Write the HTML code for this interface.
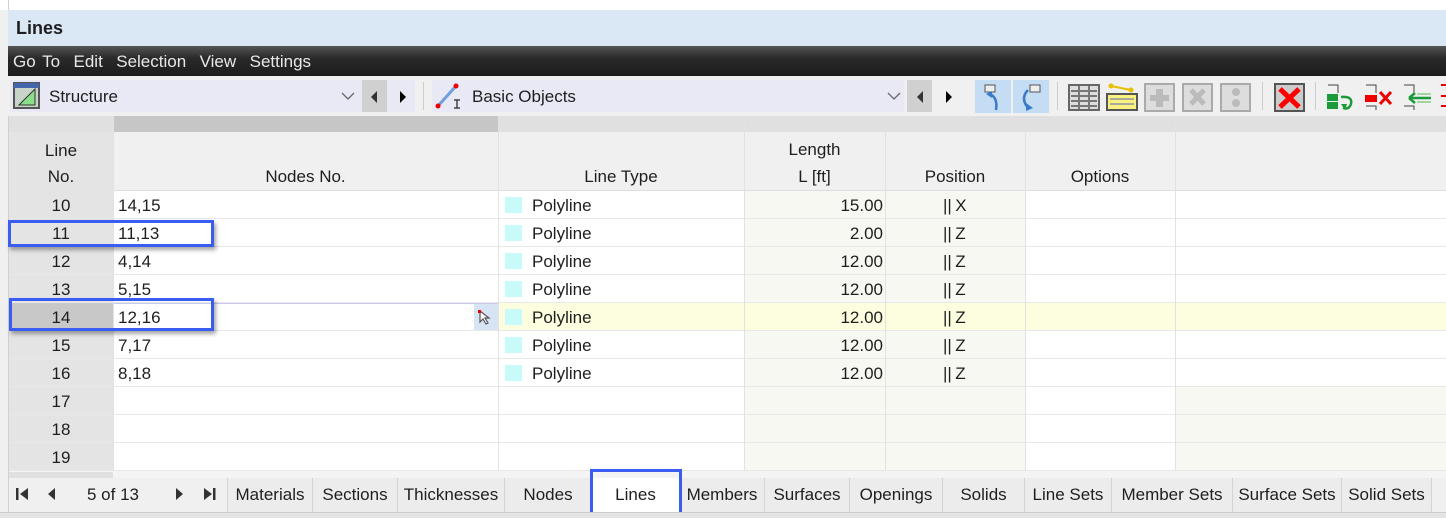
<!DOCTYPE html>
<html><head><meta charset="utf-8">
<style>
*{margin:0;padding:0;box-sizing:border-box}
body{width:1446px;height:518px;overflow:hidden;background:#f0f0f0;font-family:"Liberation Sans",sans-serif;font-size:17px;color:#1e1e1e;position:relative}
.a{position:absolute}
.t{position:absolute;white-space:nowrap;line-height:28px}
.tab{position:absolute;top:478px;height:34px;line-height:34px;text-align:center;background:#ececec;border-right:1px solid #d4d4d4;font-size:17px}
</style></head><body>
<div class="a" style="left:0;top:0;width:1446px;height:10px;background:#fff"></div>
<div class="a" style="left:8px;top:0;width:1px;height:518px;background:#d0d0d0"></div>
<div class="a" style="left:8px;top:10px;width:1438px;height:36px;background:#dae7f5"></div>
<div class="t" style="left:16px;top:14px;font-weight:bold;font-size:18px">Lines</div>
<div class="a" style="left:8px;top:46px;width:1438px;height:30px;background:linear-gradient(#555,#2a2a2a 40%,#1c1c1c)"></div>
<div class="t" style="left:13px;top:48px;color:#e8e8e8;word-spacing:2px">Go To&nbsp; Edit&nbsp; Selection&nbsp; View&nbsp; Settings</div>
<!-- toolbar -->
<div class="a" style="left:8px;top:76px;width:1438px;height:40px;background:#f0f0f0"></div>
<div class="a" style="left:10px;top:80px;width:405px;height:32px;background:#e8e9f4"></div>
<div class="a" style="left:362px;top:80px;width:25px;height:32px;background:#d0d0d0"></div>
<svg class="a" style="left:13px;top:82px" width="28" height="28"><rect x="1" y="1" width="25" height="25" fill="#c8d4c8" stroke="#555" stroke-width="2"/><rect x="1" y="1" width="25" height="5" fill="#4466aa"/><path d="M6 23L22 7V23Z" fill="#88e088" stroke="#333"/></svg>
<div class="t" style="left:49px;top:83px">Structure</div>
<svg class="a" style="left:341px;top:91px" width="14" height="10"><path d="M1 2L7 8L13 2" stroke="#666" stroke-width="1.3" fill="none"/></svg>
<svg class="a" style="left:368px;top:90px" width="12" height="14"><path d="M9 1L3 7L9 13Z" fill="#333"/></svg>
<svg class="a" style="left:397px;top:90px" width="12" height="14"><path d="M3 1L9 7L3 13Z" fill="#000"/></svg>
<div class="a" style="left:423px;top:82px;width:1px;height:28px;background:#ccc"></div>
<div class="a" style="left:432px;top:80px;width:472px;height:32px;background:#e8e9f4"></div>
<div class="a" style="left:907px;top:80px;width:25px;height:32px;background:#d0d0d0"></div>
<svg class="a" style="left:434px;top:82px" width="30" height="28"><line x1="4" y1="24" x2="22" y2="4" stroke="#6fa0e0" stroke-width="3"/><circle cx="4" cy="24" r="2.5" fill="#e00"/><circle cx="22" cy="4" r="2.5" fill="#e00"/><path d="M20 18h6M23 18v8M20 26h6" stroke="#444" stroke-width="1.5"/></svg>
<div class="t" style="left:472px;top:83px">Basic Objects</div>
<svg class="a" style="left:887px;top:91px" width="14" height="10"><path d="M1 2L7 8L13 2" stroke="#666" stroke-width="1.3" fill="none"/></svg>
<svg class="a" style="left:914px;top:90px" width="12" height="14"><path d="M9 1L3 7L9 13Z" fill="#333"/></svg>
<svg class="a" style="left:943px;top:90px" width="12" height="14"><path d="M3 1L9 7L3 13Z" fill="#000"/></svg>
<div class="a" style="left:975px;top:80px;width:36px;height:33px;background:#c4dcf4"></div>
<div class="a" style="left:1013px;top:80px;width:36px;height:33px;background:#c4dcf4"></div>
<svg class="a" style="left:978px;top:82px" width="32" height="30"><rect x="7" y="3" width="10" height="7" fill="#eee" stroke="#555"/><path d="M12 12Q20 16 18 28" stroke="#3a7bc8" stroke-width="2.5" fill="none"/><path d="M8 12L14 9L14 16Z" fill="#3a7bc8"/></svg>
<svg class="a" style="left:1016px;top:82px" width="32" height="30"><rect x="14" y="3" width="10" height="7" fill="#eee" stroke="#555"/><path d="M12 8Q4 16 12 26" stroke="#3a7bc8" stroke-width="2.5" fill="none"/><path d="M10 21L17 26L10 29Z" fill="#3a7bc8"/></svg>
<div class="a" style="left:1057px;top:82px;width:1px;height:28px;background:#ccc"></div>
<svg class="a" style="left:1068px;top:82px" width="32" height="30"><rect x="1" y="3" width="30" height="25" fill="#ddd" stroke="#666" stroke-width="2"/><path d="M3 9h26M3 14h26M3 19h26M3 24h26M11 4v23M21 4v23" stroke="#777" stroke-width="2"/></svg>
<svg class="a" style="left:1106px;top:82px" width="32" height="30"><line x1="5" y1="4" x2="25" y2="8" stroke="#e8c000" stroke-width="2"/><circle cx="5" cy="4" r="2.5" fill="#e8c000"/><circle cx="25" cy="8" r="2.5" fill="#e8c000"/><rect x="1" y="12" width="30" height="16" fill="#f8f080" stroke="#555" stroke-width="2"/><path d="M4 17h24M4 22h24" stroke="#aa9" stroke-width="2"/></svg>
<svg class="a" style="left:1144px;top:82px" width="32" height="30"><rect x="1" y="2" width="29" height="27" fill="#ddd" stroke="#aaa" stroke-width="2"/><path d="M12 7h7v6h6v6h-6v6h-7v-6h-6v-6h6Z" fill="#bbb"/></svg>
<svg class="a" style="left:1182px;top:82px" width="32" height="30"><rect x="1" y="2" width="29" height="27" fill="#ddd" stroke="#aaa" stroke-width="2"/><path d="M9 8L22 22M22 8L9 22" stroke="#bbb" stroke-width="5"/></svg>
<svg class="a" style="left:1220px;top:82px" width="32" height="30"><rect x="1" y="2" width="29" height="27" fill="#ddd" stroke="#aaa" stroke-width="2"/><circle cx="16" cy="10" r="4" fill="#bbb"/><circle cx="16" cy="21" r="4" fill="#bbb"/></svg>
<div class="a" style="left:1262px;top:82px;width:1px;height:28px;background:#ccc"></div>
<svg class="a" style="left:1274px;top:82px" width="32" height="30"><rect x="1" y="2" width="29" height="27" fill="#ccc" stroke="#555" stroke-width="2"/><path d="M6 7L25 25M25 7L6 25" stroke="#f00" stroke-width="5"/></svg>
<div class="a" style="left:1315px;top:82px;width:1px;height:28px;background:#ccc"></div>
<svg class="a" style="left:1325px;top:82px" width="34" height="30"><path d="M3 3h10v8" stroke="#444" fill="none"/><rect x="2" y="12" width="11" height="7" fill="#1a9a3a"/><rect x="2" y="20" width="11" height="7" fill="#1a9a3a"/><path d="M16 15Q28 14 26 22Q24 28 18 26" stroke="#1a9a3a" stroke-width="2.5" fill="none"/><path d="M16 22L20 28L22 22Z" fill="#1a9a3a"/></svg>
<svg class="a" style="left:1363px;top:82px" width="34" height="30"><path d="M3 3h10v8M3 24h10v4" stroke="#444" fill="none"/><rect x="2" y="13" width="12" height="7" fill="#e00"/><path d="M17 10L28 22M28 10L17 22" stroke="#e00" stroke-width="3"/></svg>
<svg class="a" style="left:1401px;top:82px" width="34" height="30"><path d="M3 3h10v8M3 24h10v4" stroke="#444" fill="none"/><path d="M8 16h22M8 16l6-5M8 16l6 5" stroke="#1a9a3a" stroke-width="2.5" fill="none"/><path d="M16 12h14M16 20h14" stroke="#8c8" stroke-width="1.5"/></svg>
<svg class="a" style="left:1438px;top:82px" width="8" height="30"><path d="M3 3h5M3 14h5M3 24h5" stroke="#e00" stroke-width="2"/></svg>
<!-- table header -->
<div class="a" style="left:9px;top:116px;width:1437px;height:16px;background:#e0e0e0"></div>
<div class="a" style="left:113px;top:116px;width:385px;height:16px;background:#c6c6c6"></div>
<div class="a" style="left:9px;top:132px;width:1437px;height:59px;background:#f0f0f0;border-bottom:1px solid #ddd"></div>
<div class="a" style="left:9px;top:132px;width:104px;height:59px;background:#e4e4e4"></div>
<div class="t" style="left:9px;top:138px;width:104px;text-align:center;line-height:26px">Line<br>No.</div>
<div class="t" style="left:113px;top:163px;width:385px;text-align:center">Nodes No.</div>
<div class="t" style="left:498px;top:163px;width:246px;text-align:center">Line Type</div>
<div class="t" style="left:744px;top:136px;width:141px;text-align:center;line-height:27px">Length<br>L [ft]</div>
<div class="t" style="left:885px;top:163px;width:140px;text-align:center">Position</div>
<div class="t" style="left:1025px;top:163px;width:150px;text-align:center">Options</div>
<!-- body -->
<div class="a" style="left:9px;top:191px;width:1437px;height:287px;background:#fff"></div>
<div class="a" style="left:9px;top:191px;width:104px;height:287px;background:#e4e4e4"></div>
<div class="a" style="left:744px;top:191px;width:281px;height:287px;background:#f8f8f2"></div>
<div class="a" style="left:1175px;top:387px;width:271px;height:91px;background:#f8f8f2"></div>
<div class="a" style="left:9px;top:303px;width:1437px;height:28px;background:#fdfde0"></div>
<div class="a" style="left:9px;top:303px;width:104px;height:28px;background:#c8c8c8"></div>
<div class="a" style="left:113px;top:303px;width:385px;height:28px;background:#fff;border:1px solid #c8c8f0"></div>
<div class="a" style="left:474px;top:304px;width:24px;height:26px;background:#d6e4f4"></div>
<svg class="a" style="left:476px;top:308px" width="20" height="18"><path d="M4 3L4 14L7 11L10 16L12 15L9 10L13 10Z" stroke="#555" fill="#fff" stroke-width="1.2"/><rect x="2" y="2" width="3" height="3" fill="#e00"/></svg>
<div id="rows"></div>
<div class="a" style="left:113px;top:116px;width:1px;height:362px;background:#e2e2e2"></div>
<div class="a" style="left:498px;top:116px;width:1px;height:362px;background:#e2e2e2"></div>
<div class="a" style="left:744px;top:116px;width:1px;height:362px;background:#e2e2e2"></div>
<div class="a" style="left:885px;top:116px;width:1px;height:362px;background:#e2e2e2"></div>
<div class="a" style="left:1025px;top:116px;width:1px;height:362px;background:#e2e2e2"></div>
<div class="a" style="left:1175px;top:116px;width:1px;height:362px;background:#e2e2e2"></div>
<script>
var d=[["10","14,15","15.00","X"],["11","11,13","2.00","Z"],["12","4,14","12.00","Z"],["13","5,15","12.00","Z"],["14","12,16","12.00","Z"],["15","7,17","12.00","Z"],["16","8,18","12.00","Z"],["17"],["18"],["19"]];
var h="";
for(var i=0;i<10;i++){var y=191+28*i,r=d[i],ty=y+1;
h+='<div class="a" style="left:9px;top:'+(y+27)+'px;width:1437px;height:1px;background:#e8e8e8"></div>';
h+='<div class="t" style="left:9px;top:'+ty+'px;width:104px;text-align:center">'+r[0]+'</div>';
if(r[1]){h+='<div class="t" style="left:118px;top:'+ty+'px">'+r[1]+'</div>';
h+='<div class="a" style="left:505px;top:'+(y+6)+'px;width:17px;height:16px;background:#c8fafa"></div>';
h+='<div class="t" style="left:532px;top:'+ty+'px">Polyline</div>';
h+='<div class="t" style="left:744px;top:'+ty+'px;width:139px;text-align:right">'+r[2]+'</div>';
h+='<div class="t" style="left:943px;top:'+ty+'px">||&thinsp;'+r[3]+'</div>';}}
document.getElementById("rows").innerHTML=h;
</script>
<div class="a" style="left:8px;top:220px;width:206px;height:27px;border:3px solid #3a5cf0;box-shadow:2px 3px 4px rgba(0,0,0,.35)"></div>
<div class="a" style="left:9px;top:298px;width:205px;height:33px;border:3px solid #3a5cf0;box-shadow:2px 3px 4px rgba(0,0,0,.35)"></div>
<!-- tabs -->
<div class="a" style="left:9px;top:471px;width:1437px;height:7px;background:#f4f4f4"></div>
<div class="a" style="left:9px;top:472px;width:104px;height:6px;background:#e0e0e0"></div>
<div class="a" style="left:9px;top:478px;width:1437px;height:34px;background:#f0f0f0"></div>
<svg class="a" style="left:14px;top:486px" width="20" height="16"><rect x="2" y="2" width="2.5" height="12" fill="#333"/><path d="M14 2L6 8L14 14Z" fill="#333"/></svg>
<svg class="a" style="left:45px;top:486px" width="14" height="16"><path d="M10 2L3 8L10 14Z" fill="#333"/></svg>
<div class="t" style="left:87px;top:481px">5 of 13</div>
<svg class="a" style="left:173px;top:486px" width="14" height="16"><path d="M3 2L10 8L3 14Z" fill="#333"/></svg>
<svg class="a" style="left:200px;top:486px" width="20" height="16"><path d="M4 2L12 8L4 14Z" fill="#333"/><rect x="13" y="2" width="2.5" height="12" fill="#333"/></svg>
<div class="tab" style="left:227px;width:86px;border-left:1px solid #d4d4d4">Materials</div>
<div class="tab" style="left:313px;width:85px">Sections</div>
<div class="tab" style="left:398px;width:107px">Thicknesses</div>
<div class="tab" style="left:505px;width:87px">Nodes</div>
<div class="tab" style="left:592px;width:88px;background:#fff">Lines</div>
<div class="tab" style="left:680px;width:85px">Members</div>
<div class="tab" style="left:765px;width:85px">Surfaces</div>
<div class="tab" style="left:850px;width:93px">Openings</div>
<div class="tab" style="left:943px;width:82px">Solids</div>
<div class="tab" style="left:1025px;width:87px">Line Sets</div>
<div class="tab" style="left:1112px;width:121px">Member Sets</div>
<div class="tab" style="left:1233px;width:109px">Surface Sets</div>
<div class="tab" style="left:1342px;width:90px">Solid Sets</div>
<div class="a" style="left:590px;top:469px;width:92px;height:48px;border:3px solid #3a5cf0"></div>
<div class="a" style="left:0;top:512px;width:1446px;height:6px;background:#e4e4e4;border-top:1px solid #ccc"></div>
</body></html>
